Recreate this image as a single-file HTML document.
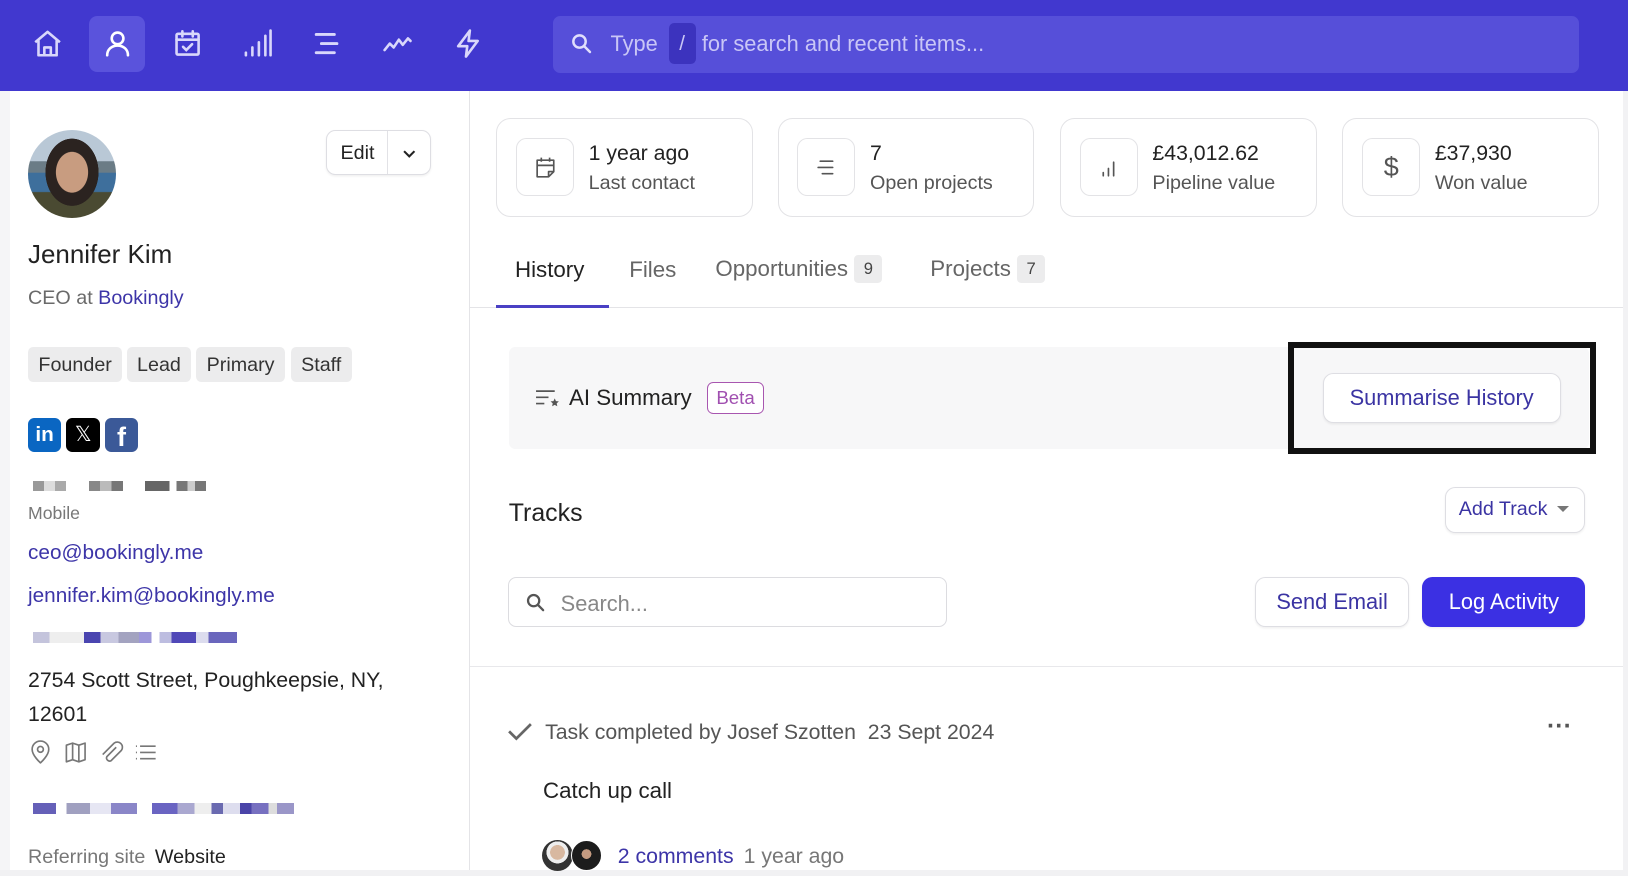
<!DOCTYPE html>
<html><head><meta charset="utf-8"><style>
html,body{margin:0;padding:0;background:#fff;overflow:hidden;width:1628px;height:876px}
#w{position:absolute;left:0;top:0;width:1568px;height:844px;zoom:1.03827;font-family:"Liberation Sans",sans-serif;color:#222}
.a{position:absolute;white-space:nowrap}
.nav{position:absolute;left:0;top:0;width:1568px;height:88px;background:#4138cf}
.ni{position:absolute;top:27px;width:30px;height:30px}
.card{position:absolute;top:114px;height:95px;border:1px solid #e3e3e6;border-radius:14px;box-sizing:border-box;width:247px}
.ib{position:absolute;left:18px;top:18px;width:56px;height:56px;border:1px solid #e3e3e6;border-radius:10px;box-sizing:border-box}
.cv{position:absolute;left:88px;top:21px;font-size:20.5px;color:#222}
.cl{position:absolute;left:88px;top:51px;font-size:19px;color:#555}
.tag{position:absolute;top:334px;height:34px;line-height:35px;background:#ececed;border-radius:5px;font-size:19px;color:#333;padding:0 10px}
.btn{position:absolute;border:1px solid #dedee3;border-radius:10px;background:#fff;box-sizing:border-box;color:#3b34a3;font-size:21px;text-align:center;box-shadow:0 1px 2px rgba(0,0,0,.06)}
.badge{display:inline-block;background:#ececed;border-radius:4px;font-size:16px;color:#444;width:27px;height:27px;line-height:27px;text-align:center;vertical-align:2px;margin-left:6px}
.px{position:absolute;height:10px}
</style></head><body><div id="w">
<div class="nav">
 <div style="position:absolute;left:86px;top:15px;width:54px;height:54px;background:#5a53dc;border-radius:8px"></div>
 <svg class="ni" style="left:31px" viewBox="0 0 24 24" fill="none" stroke="#d9d7fb" stroke-width="2" stroke-linejoin="round"><path d="M2.5 11L12 3l9.5 8M5 9.5V21h14V9.5M9.5 21v-6h5v6"/></svg>
 <svg class="ni" style="left:98px" viewBox="0 0 24 24" fill="none" stroke="#fff" stroke-width="2" stroke-linecap="round"><circle cx="12" cy="8" r="4.5"/><path d="M4 21c0-4.5 3.5-7.5 8-7.5s8 3 8 7.5"/></svg>
 <svg class="ni" style="left:166px" viewBox="0 0 24 24" fill="none" stroke="#d9d7fb" stroke-width="2" stroke-linecap="round"><rect x="3.5" y="4.5" width="17" height="16" rx="1"/><path d="M3.5 9h17M8 2.5v4M16 2.5v4M8.5 14.5l2.5 2.5 4.5-4.5"/></svg>
 <svg class="ni" style="left:233px" viewBox="0 0 24 24" fill="none" stroke="#d9d7fb" stroke-width="2" stroke-linecap="round"><path d="M3 21v-2M8 21v-6M13 21v-10M18 21V6M22 21V2"/></svg>
 <svg class="ni" style="left:300px" viewBox="0 0 24 24" fill="none" stroke="#d9d7fb" stroke-width="2.2" stroke-linecap="round"><path d="M4 5h14M8 12h12M4 19h14"/></svg>
 <svg class="ni" style="left:368px" viewBox="0 0 24 24" fill="none" stroke="#d9d7fb" stroke-width="2" stroke-linecap="round" stroke-linejoin="round"><path d="M2 17l4-5 3 3 4-6 3 4 4-5 2 2"/></svg>
 <svg class="ni" style="left:436px" viewBox="0 0 24 24" fill="none" stroke="#d9d7fb" stroke-width="2" stroke-linejoin="round"><path d="M13 2L4 14h7l-1 8 9-12h-7z"/></svg>
 <div style="position:absolute;left:533px;top:15px;width:988px;height:55px;background:#564fd9;border-radius:7px"></div>
 <svg class="a" style="left:549px;top:31px" width="22" height="22" viewBox="0 0 24 24" fill="none" stroke="#e0defc" stroke-width="2.6" stroke-linecap="round"><circle cx="10" cy="10" r="6.5"/><path d="M15 15l6 6"/></svg>
 <div class="a" style="left:588px;top:30px;font-size:21px;color:#c9c6f6">Type</div>
 <div style="position:absolute;left:644px;top:22px;width:26px;height:40px;background:#3c33be;border-radius:5px;color:#c9c6f6;font-size:20px;text-align:center;line-height:40px">/</div>
 <div class="a" style="left:676px;top:30px;font-size:21px;color:#c9c6f6">for search and recent items...</div>
</div>

<div style="position:absolute;left:0;top:88px;width:10px;height:756px;background:#f5f5f7"></div>
<div style="position:absolute;left:452px;top:88px;width:1px;height:756px;background:#e4e4e7"></div>
<div style="position:absolute;left:1563px;top:88px;width:5px;height:756px;background:#f2f2f4"></div>
<div style="position:absolute;left:0;top:838px;width:1568px;height:6px;background:#f1f1f3"></div>

<div style="position:absolute;left:27px;top:125px;width:85px;height:85px;border-radius:50%;background:radial-gradient(ellipse 30% 38% at 50% 48%,#c89c80 0 60%,#2b2320 62%,#2b2320 100%,transparent 101%),linear-gradient(#b9c8d6 0 35%,#6b7c86 36% 48%,#3e6f9c 49% 70%,#4a4a32 71%);"></div>
<div class="btn" style="left:314px;top:125px;width:101px;height:44px;border-radius:9px;color:#222;font-size:19px;text-align:left">
 <span class="a" style="left:13px;top:11px">Edit</span>
 <div style="position:absolute;left:58px;top:0;width:1px;height:42px;background:#e2e2e6"></div>
 <svg class="a" style="left:72px;top:15px" width="14" height="14" viewBox="0 0 14 14" fill="none" stroke="#222" stroke-width="2"><path d="M2 5l5 5 5-5"/></svg>
</div>
<div class="a" style="left:27px;top:232px;font-size:25px;color:#222">Jennifer Kim</div>
<div class="a" style="left:27px;top:276px;font-size:19px;color:#6a6a6a">CEO at <span style="color:#3d35a8">Bookingly</span></div>
<div class="tag" style="left:27px">Founder</div>
<div class="tag" style="left:122px">Lead</div>
<div class="tag" style="left:189px">Primary</div>
<div class="tag" style="left:280px">Staff</div>
<div style="position:absolute;left:27px;top:403px;width:32px;height:32px;background:#0a66c2;border-radius:6px;color:#fff;font-weight:bold;font-size:20px;text-align:center;line-height:32px">in</div>
<div style="position:absolute;left:64px;top:403px;width:32px;height:32px;background:#000;border-radius:6px;color:#fff;font-size:20px;text-align:center;line-height:32px">𝕏</div>
<div style="position:absolute;left:101px;top:403px;width:32px;height:32px;background:#3b5998;border-radius:6px;color:#fff;font-weight:bold;font-size:26px;text-align:center;line-height:38px;overflow:hidden">f</div>
<div class="px" style="left:32px;top:463px;width:32px;background:linear-gradient(90deg,#999 0 33%,#ddd 33% 66%,#aaa 66%)"></div>
<div class="px" style="left:86px;top:463px;width:32px;background:linear-gradient(90deg,#888 0 33%,#bbb 33% 66%,#777 66%)"></div>
<div class="px" style="left:140px;top:463px;width:58px;background:linear-gradient(90deg,#666 0 40%,#fff 40% 52%,#777 52% 70%,#ccc 70% 82%,#777 82%)"></div>
<div class="a" style="left:27px;top:484px;font-size:17px;color:#777">Mobile</div>
<div class="a" style="left:27px;top:521px;font-size:20px;color:#3d35a8">ceo@bookingly.me</div>
<div class="a" style="left:27px;top:562px;font-size:20px;color:#3d35a8">jennifer.kim@bookingly.me</div>
<div class="px" style="left:32px;top:609px;width:196px;background:linear-gradient(90deg,#c4c4dc 0 8%,#eee 8% 25%,#4a45b0 25% 33%,#c8c8e0 33% 42%,#a3a3c0 42% 52%,#9d97d9 52% 58%,#fff 58% 62%,#bdbde0 62% 68%,#5048b8 68% 80%,#dcdcee 80% 86%,#6a66bd 86%)"></div>
<div class="a" style="left:27px;top:643px;font-size:20.5px;color:#222">2754 Scott Street, Poughkeepsie, NY,</div>
<div class="a" style="left:27px;top:676px;font-size:20.5px;color:#222">12601</div>
<svg class="a" style="left:28px;top:713px" width="128" height="24" viewBox="0 0 128 24" fill="none" stroke="#777" stroke-width="1.6" stroke-linejoin="round"><path d="M11 22s-8-7-8-13a8 8 0 0116 0c0 6-8 13-8 13z"/><circle cx="11" cy="9" r="2.8"/><path d="M36 5l6-2 6 2 6-2v16l-6 2-6-2-6 2zM42 3v16M48 5v16"/><path d="M84 7l-9 9a3 3 0 004 4l10-10a5 5 0 00-7-7L71 14"/><path d="M107 6h15M107 12h15M107 18h15M103 6h1M103 12h1M103 18h1"/></svg>
<div class="px" style="left:32px;top:773px;width:100px;height:11px;background:linear-gradient(90deg,#6560b8 0 22%,#fff 22% 32%,#a0a0c0 32% 55%,#e6e6f3 55% 75%,#8a86c8 75%)"></div>
<div class="px" style="left:146px;top:773px;width:137px;height:11px;background:linear-gradient(90deg,#6a64c2 0 18%,#aaa8d0 18% 30%,#eee 30% 42%,#6a6ab0 42% 50%,#dde 50% 62%,#4a44a8 62% 70%,#7770c0 70% 82%,#ddd 82% 88%,#9a96c8 88%)"></div>
<div class="a" style="left:27px;top:815px;font-size:19px;color:#777">Referring site <span style="color:#222;margin-left:4px">Website</span></div>

<div class="card" style="left:478px"><div class="ib"><svg style="position:absolute;left:15px;top:15px" width="24" height="24" viewBox="0 0 24 24" fill="none" stroke="#555" stroke-width="1.6" stroke-linejoin="round"><path d="M4 5h16v11l-5 5H4zM4 10h16M8 2.5v4M16 2.5v4M15 21v-5h5"/></svg></div><div class="cv">1 year ago</div><div class="cl">Last contact</div></div>
<div class="card" style="left:749px"><div class="ib"><svg style="position:absolute;left:15px;top:15px" width="24" height="24" viewBox="0 0 24 24" fill="none" stroke="#555" stroke-width="1.6" stroke-linecap="round"><path d="M6 6h12M4 12h14M8 18h10"/></svg></div><div class="cv">7</div><div class="cl">Open projects</div></div>
<div class="card" style="left:1021px"><div class="ib"><svg style="position:absolute;left:15px;top:15px" width="24" height="24" viewBox="0 0 24 24" fill="none" stroke="#555" stroke-width="1.6" stroke-linecap="round"><path d="M7 20v-3M12 20v-7M17 20V7"/></svg></div><div class="cv">£43,012.62</div><div class="cl">Pipeline value</div></div>
<div class="card" style="left:1293px"><div class="ib" style="font-size:26px;color:#555;text-align:center;line-height:54px">$</div><div class="cv">£37,930</div><div class="cl">Won value</div></div>

<div class="a" style="left:496px;top:248px;font-size:21.5px;color:#222">History</div>
<div class="a" style="left:606px;top:248px;font-size:21.5px;color:#666">Files</div>
<div class="a" style="left:689px;top:246px;font-size:21.5px;color:#666">Opportunities<span class="badge">9</span></div>
<div class="a" style="left:896px;top:246px;font-size:21.5px;color:#666">Projects<span class="badge">7</span></div>
<div style="position:absolute;left:453px;top:296px;width:1110px;height:1px;background:#e4e4e7"></div>
<div style="position:absolute;left:478px;top:294px;width:109px;height:3px;background:#4a40c4"></div>

<div style="position:absolute;left:490px;top:334px;width:1040px;height:98px;background:#f7f7f8;border-radius:6px"></div>
<svg class="a" style="left:515px;top:374px" width="24" height="18" viewBox="0 0 24 18" fill="none" stroke="#555" stroke-width="1.6"><path d="M1 3h18M1 9h12M1 15h8"/><path d="M19 10l1.2 2.6 2.8.3-2.1 1.9.6 2.8-2.5-1.4-2.5 1.4.6-2.8-2.1-1.9 2.8-.3z" fill="#555" stroke="none"/></svg>
<div class="a" style="left:548px;top:371px;font-size:21.5px;color:#222">AI Summary</div>
<div class="a" style="left:681px;top:368px;height:29px;line-height:29px;padding:0 8px;border:1px solid #a856b0;border-radius:6px;color:#a04fb0;font-size:18px;background:#fff">Beta</div>
<div style="position:absolute;left:1241px;top:329px;width:296px;height:108px;border:6px solid #111;box-sizing:border-box"></div>
<div class="btn" style="left:1274px;top:359px;width:229px;height:48px;line-height:47px">Summarise History</div>

<div class="a" style="left:490px;top:481px;font-size:24px;color:#222">Tracks</div>
<div class="btn" style="left:1392px;top:469px;width:135px;height:44px;line-height:42px;font-size:19px;text-align:left;padding-left:12px">Add Track <span style="display:inline-block;width:0;height:0;border-left:6px solid transparent;border-right:6px solid transparent;border-top:6px solid #777;vertical-align:3px;margin-left:4px"></span></div>
<div style="position:absolute;left:489px;top:556px;width:423px;height:48px;border:1px solid #dcdce0;border-radius:8px;box-sizing:border-box"></div>
<svg class="a" style="left:506px;top:570px" width="20" height="20" viewBox="0 0 24 24" fill="none" stroke="#555" stroke-width="2.6" stroke-linecap="round"><circle cx="10" cy="10" r="6.5"/><path d="M15 15l6 6"/></svg>
<div class="a" style="left:540px;top:569px;font-size:21px;color:#888">Search...</div>
<div class="btn" style="left:1209px;top:556px;width:148px;height:48px;line-height:47px">Send Email</div>
<div class="btn" style="left:1370px;top:556px;width:157px;height:48px;line-height:48px;background:#3b30e3;border:none;color:#fff">Log Activity</div>
<div style="position:absolute;left:453px;top:641px;width:1110px;height:1px;background:#e8e8eb"></div>

<svg class="a" style="left:488px;top:694px" width="25" height="20" viewBox="0 0 25 20" fill="none" stroke="#666" stroke-width="2.6"><path d="M2 10l7 7L23 3"/></svg>
<div class="a" style="left:525px;top:693px;font-size:20.5px;color:#555">Task completed by Josef Szotten&nbsp; 23 Sept 2024</div>
<div class="a" style="left:1490px;top:686px;font-size:24px;font-weight:bold;color:#555;letter-spacing:0">···</div>
<div class="a" style="left:523px;top:749px;font-size:21.5px;color:#222">Catch up call</div>
<div style="position:absolute;left:522px;top:809px;width:30px;height:30px;border-radius:50%;background:radial-gradient(circle at 50% 40%,#d8b8a0 0 30%,#eee 31% 45%,#333 46%)"></div>
<div style="position:absolute;left:550px;top:809px;width:30px;height:30px;border-radius:50%;background:radial-gradient(circle at 50% 45%,#c49a80 0 22%,#1c1c1c 23%);border:1px solid #fff;box-sizing:border-box"></div>
<div class="a" style="left:595px;top:813px;font-size:20.5px;color:#3d35a8">2 comments <span style="color:#777;margin-left:4px">1 year ago</span></div>
</div></body></html>
